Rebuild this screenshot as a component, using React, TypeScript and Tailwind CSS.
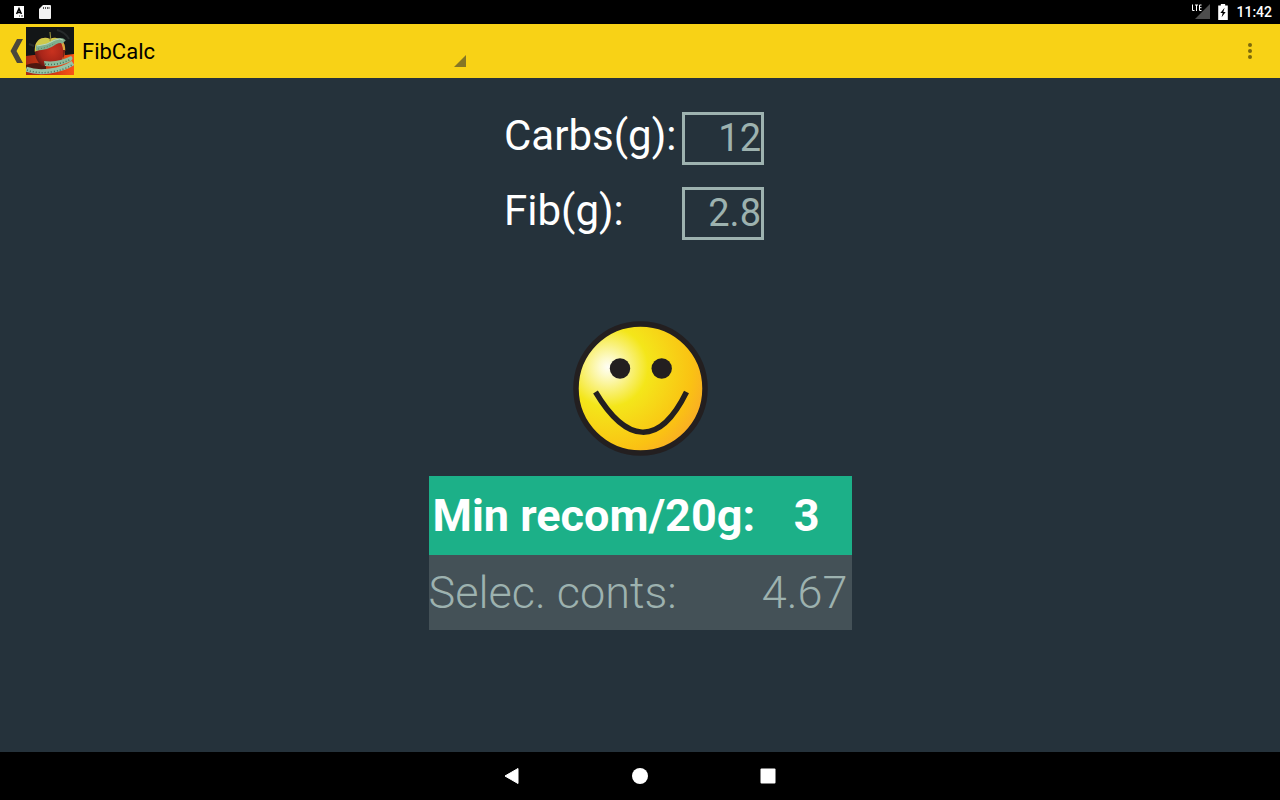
import { useState } from 'react';

// ─── Status bar ───────────────────────────────────────────────────────────────
function StatusBar() {
  return (
    <div className="flex h-6 shrink-0 items-center justify-between bg-black pr-2 pl-3 text-white">
      <div className="flex items-center gap-3">
        <svg viewBox="0 0 14 14" className="size-3.5" aria-hidden="true">
          <rect x="2" y="1" width="10" height="12" fill="#fff" />
          <path d="M4.6 9 7 3.6 9.4 9M5.4 7.4h3.2" fill="none" stroke="#000" strokeWidth="1.5" />
          <path d="M7 11h1M9 11h2" stroke="#000" strokeWidth="0.8" />
        </svg>
        <svg viewBox="0 0 14 16" className="h-4 w-3.5" aria-hidden="true">
          <path d="M5 1h7q1 0 1 1v12q0 1-1 1H2q-1 0-1-1V5z" fill="#f2f2f2" />
          <path d="M5.5 3v2M7.5 3v2M9.5 3v2M11 3v2" stroke="#555" />
        </svg>
      </div>
      <div className="flex items-center gap-2">
        <svg viewBox="0 0 20 16" className="h-4 w-5" aria-hidden="true">
          <path d="M20 0v15H5z" fill="#4d4d4d" />
          <path d="M2.500 .5v6h2M5 1h3M6.500 1v6M11.500 1H9.500v5.500h2M9.500 3.700h2" fill="none" stroke="#fff" />
        </svg>
        <svg viewBox="0 0 9 15" className="h-4 w-2.5" aria-hidden="true">
          <path d="M0 1.500h2.500V0h4v1.500H9V15H0z" fill="#fff" />
          <path d="M6 3.500 2 8.500h2.200l-1 4L7 7.500H4.800z" fill="#000" />
        </svg>
        <span className="text-sm font-medium">11:42</span>
      </div>
    </div>
  );
}

function AppleIcon() {
  return (
    <svg viewBox="0 0 48 48" className="size-12" aria-hidden="true">
      <defs>
        <radialGradient id="apple" cx="0.55" cy="0.5" r="0.6">
          <stop offset="0" stopColor="#c9321f" />
          <stop offset="0.6" stopColor="#a82519" />
          <stop offset="1" stopColor="#541410" />
        </radialGradient>
        <linearGradient id="table" x1="0" x2="1">
          <stop offset="0" stopColor="#a82a14" />
          <stop offset="0.6" stopColor="#d63c14" />
          <stop offset="1" stopColor="#fa5518" />
        </linearGradient>
        <clipPath id="frame">
          <path d="M0 0h48v48H0z" />
        </clipPath>
        <clipPath id="fruit">
          <path d="M24 12c6-3 14 0 15 8 1 9-3 15-9 19H16C10 34 8 27 9 20c1-8 9-11 15-8z" />
        </clipPath>
      </defs>
      <g clipPath="url(#frame)">
        <path d="M0 0h48v48H0z" fill="#131617" />
        <path d="M31 3q8 2 12 9M3 17l5 2" stroke="#262a2b" strokeWidth="2" fill="none" />
        <path d="M0 29q12-2 24-1t24-1v21H0z" fill="url(#table)" />
        <path d="M0 38q10-4 20 0v6L0 42z" fill="#4e1810" />
        <g clipPath="url(#fruit)">
          <path d="M8 8h33v32H8z" fill="url(#apple)" />
          <path d="M8 8h33v8q-8-4-16 1T8 25z" fill="#cfc94a" />
          <path d="M35 15h6v19h-5q3-9-1-19z" fill="#d9a53e" />
          <path d="M37 23h4v12h-4z" fill="#7c2116" />
        </g>
        <path d="M24 14q1-4 0-9" stroke="#8f8a3c" strokeWidth="1.2" fill="none" />
        {/* Measuring tape */}
        <path d="M10 21q11 0 19-6 6-3 9 0" stroke="#7fae8d" strokeWidth="5" fill="none" />
        <path d="M11 19q11-1 18-6 5-2 8 0" stroke="#bdd8bd" strokeWidth="1" fill="none" />
        <path d="M12 22q9-1 17-6" stroke="#557f64" strokeDasharray="1 2" fill="none" />
        <path d="M18 34q14 2 27-5 3 2 0 5-13 7-26 5z" fill="#8dbd9d" />
        <path d="M19 37q13 2 26-5" stroke="#47725a" strokeDasharray="1 2" strokeWidth="1.500" fill="none" />
        <path d="M0 42q10 4 24 2t23-8" stroke="#98c4a6" strokeWidth="5" fill="none" />
        <path d="M1 43q11 4 24 2t21-7" stroke="#47725a" strokeWidth="1.500" strokeDasharray="1 2" fill="none" />
      </g>
    </svg>
  );
}

// ─── Action bar ───────────────────────────────────────────────────────────────
function ActionBar() {
  return (
    <header className="flex h-[54px] shrink-0 items-center justify-between bg-[#f8d216] pr-5">
      <div className="flex items-center">
        <button type="button" aria-label="Back" className="flex items-center pl-2.5">
          <svg viewBox="0 0 16 26" className="h-[26px] w-4" aria-hidden="true">
            <path d="M7 1h6L6.500 13 13 25H7L.5 13z" fill="#4b483b" />
          </svg>
          <AppleIcon />
        </button>
        <div className="relative ml-2 w-96">
          <select aria-label="Section" className="h-12 w-full appearance-none bg-transparent text-[22px] text-black">
            <option>FibCalc</option>
          </select>
          <svg viewBox="0 0 12 12" className="pointer-events-none absolute right-0 bottom-2 size-3" aria-hidden="true">
            <path d="M12 0v12H0z" fill="#857625" />
          </svg>
        </div>
      </div>
      <button type="button" aria-label="More options" className="flex w-5 justify-center">
        <svg viewBox="0 0 4 16" className="h-4 w-1" aria-hidden="true">
          <g fill="#7c690b">
            <circle cx="2" cy="2" r="2" />
            <circle cx="2" cy="8" r="2" />
            <circle cx="2" cy="14" r="2" />
          </g>
        </svg>
      </button>
    </header>
  );
}

function Smiley() {
  return (
    <svg viewBox="0 0 136 136" className="size-[136px]" role="img" aria-label="Happy face">
      <defs>
        <radialGradient id="face" gradientUnits="userSpaceOnUse" cx="36" cy="47" r="108">
          <stop offset="0" stopColor="#fffef5" />
          <stop offset="0.08" stopColor="#fdfacb" />
          <stop offset="0.37" stopColor="#f4e61a" />
          <stop offset="0.78" stopColor="#fac213" />
          <stop offset="1" stopColor="#f9a62b" />
        </radialGradient>
      </defs>
      <circle cx="68.500" cy="68.500" r="64.500" fill="url(#face)" stroke="#231f20" strokeWidth="5.500" />
      <circle cx="48" cy="48.500" r="10.200" fill="#231f20" />
      <circle cx="89.700" cy="48.500" r="10.200" fill="#231f20" />
      <path d="M23.500 72C54 123 87 128 114.500 72" fill="none" stroke="#231f20" strokeWidth="5.500" />
    </svg>
  );
}

type FieldProps = { id: string; label: string; value: string; onChange: (value: string) => void };

function Field({ id, label, value, onChange }: FieldProps) {
  return (
    <div className="flex items-start">
      <label htmlFor={id} className="w-[178px] text-[42px] leading-[48px] whitespace-nowrap text-white">
        {label}
      </label>
      <input
        id={id}
        inputMode="decimal"
        value={value}
        onChange={(e) => onChange(e.target.value)}
        className="h-[53px] w-[82px] border-3 border-[#9db2af] bg-transparent text-right text-[38px] text-[#9db2af] outline-none"
      />
    </div>
  );
}

// ─── Navigation bar ───────────────────────────────────────────────────────────
function NavBar() {
  return (
    <nav className="flex h-12 shrink-0 items-center justify-center gap-[108px] bg-black">
      <button type="button" aria-label="Back">
        <svg viewBox="0 0 20 20" className="size-5" aria-hidden="true">
          <path d="M16 2.500v15L3 10z" fill="#fff" stroke="#fff" strokeLinejoin="round" />
        </svg>
      </button>
      <button type="button" aria-label="Home">
        <svg viewBox="0 0 20 20" className="size-5" aria-hidden="true">
          <circle cx="10" cy="10" r="8" fill="#fff" />
        </svg>
      </button>
      <button type="button" aria-label="Recent apps">
        <svg viewBox="0 0 20 20" className="size-5" aria-hidden="true">
          <rect x="2.500" y="2.500" width="15" height="15" rx="1" fill="#fff" />
        </svg>
      </button>
    </nav>
  );
}

export default function App() {
  const [carbs, setCarbs] = useState('12');
  const [fib, setFib] = useState('2.8');

  return (
    <div className="flex min-h-screen flex-col bg-[#25323b] font-['Roboto',sans-serif]">
      <StatusBar />
      <ActionBar />
      <main className="flex flex-1 flex-col items-center pt-[34px]">
        <form className="flex w-[272px] flex-col gap-[22px]">
          <Field id="carbs" label="Carbs(g):" value={carbs} onChange={setCarbs} />
          <Field id="fib" label="Fib(g):" value={fib} onChange={setFib} />
        </form>
        <div className="mt-20">
          <Smiley />
        </div>
        <dl className="mt-5 w-[423px] text-[45px] whitespace-nowrap">
          <div className="flex h-[79px] items-center justify-between bg-[#1cb088] pr-8 pl-1 font-bold text-white">
            <dt>Min recom/20g:</dt>
            <dd>3</dd>
          </div>
          <div className="flex h-[75px] items-center justify-between bg-[#445157] pr-1 font-light text-[#9db2af]">
            <dt>Selec. conts:</dt>
            <dd>4.67</dd>
          </div>
        </dl>
      </main>
      <NavBar />
    </div>
  );
}
